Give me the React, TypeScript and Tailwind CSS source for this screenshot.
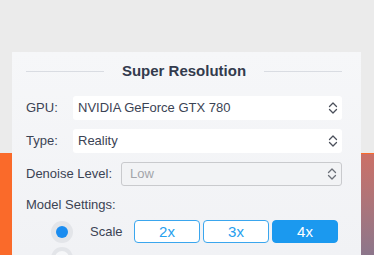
import { ReactNode } from "react";

function Chevrons({ muted = false }: { muted?: boolean }) {
  return (
    <svg width="10" height="14" viewBox="0 0 10 14" fill="none" className="shrink-0">
      <path
        d="M1.5 5.5 L5 2 L8.5 5.5 M1.5 8.5 L5 12 L8.5 8.5"
        stroke={muted ? "#6b6f78" : "#4a4f5a"}
        strokeWidth="1.3"
        strokeLinecap="round"
        strokeLinejoin="round"
      />
    </svg>
  );
}

function SelectBox({ value, disabled = false }: { value: string; disabled?: boolean }) {
  return (
    <div
      className={
        disabled
          ? "flex-1 h-6 flex items-center justify-between pl-[8px] pr-[4px] rounded-[3px] border border-[#c9cacd] bg-[#f2f3f5] text-[#a3a5aa]"
          : "flex-1 h-6 flex items-center justify-between pl-[5px] pr-[4px] rounded-[3px] bg-white text-[#3b4354]"
      }
    >
      <span>{value}</span>
      <Chevrons muted={disabled} />
    </div>
  );
}

function Row({ label, width, children }: { label: string; width: string; children: ReactNode }) {
  return (
    <div className="flex items-center">
      <span className={width}>{label}</span>
      {children}
    </div>
  );
}

export default function App() {
  return (
    <div
      className="relative w-[374px] h-[255px] overflow-hidden bg-[#ebebeb] text-[13px] text-[#3b4354]"
      style={{ fontFamily: '"Liberation Sans", Arial, sans-serif' }}
    >
      {/* backdrop behind the panel */}
      <div className="absolute left-0 right-0 top-[153px] bottom-0 bg-[#fa6a2a]" />
      <div className="absolute left-[300px] right-0 top-[154px] bottom-0 rounded-tl-[4px] bg-gradient-to-b from-[#cb7067] to-[#8c768b]" />

      <div className="relative mt-[52px] ml-[12px] w-[349px] h-[203px] bg-gradient-to-b from-[#f6f7f9] to-[#f1f2f5] pl-[14px] pr-[19px] pt-[9px]">
        <div className="flex items-center gap-[18px]">
          <div className="flex-1 h-px bg-[#d9dce2]" />
          <span className="text-[15px] leading-[20px] font-bold text-[#333b4d]">Super Resolution</span>
          <div className="flex-1 h-px bg-[#d9dce2]" />
        </div>

        <div className="mt-[15px] flex flex-col gap-[9px]">
          <Row label="GPU:" width="w-[47px]">
            <SelectBox value="NVIDIA GeForce GTX 780" />
          </Row>
          <Row label="Type:" width="w-[47px]">
            <SelectBox value="Reality" />
          </Row>
          <Row label="Denoise Level:" width="w-[95px]">
            <SelectBox value="Low" disabled />
          </Row>
        </div>

        <div className="mt-[10px] leading-[18px]">Model Settings:</div>

        <div className="mt-[6px] flex items-center">
          <div className="ml-[25px] w-[22px] h-[22px] rounded-full bg-[#e3e5e9] flex items-center justify-center">
            <div className="w-[12px] h-[12px] rounded-full bg-[#1a8cf0]" />
          </div>
          <span className="ml-[17px] w-[44px]">Scale</span>
          <div className="flex gap-[3px]">
            <button className="w-[66px] h-[23px] rounded-[4px] border border-[#3aa6ee] bg-white text-[#27a0ee] text-[15px]">2x</button>
            <button className="w-[66px] h-[23px] rounded-[4px] border border-[#3aa6ee] bg-white text-[#27a0ee] text-[15px]">3x</button>
            <button className="w-[66px] h-[23px] rounded-[4px] border border-[#1b99ef] bg-[#1b99ef] text-white text-[15px]">4x</button>
          </div>
        </div>

        <div className="mt-[4px] ml-[25px] w-[22px] h-[22px] rounded-full bg-[#e3e5e9] flex items-center justify-center">
          <div className="w-[14px] h-[14px] rounded-full bg-[#f6f7f9]" />
        </div>
      </div>
    </div>
  );
}
